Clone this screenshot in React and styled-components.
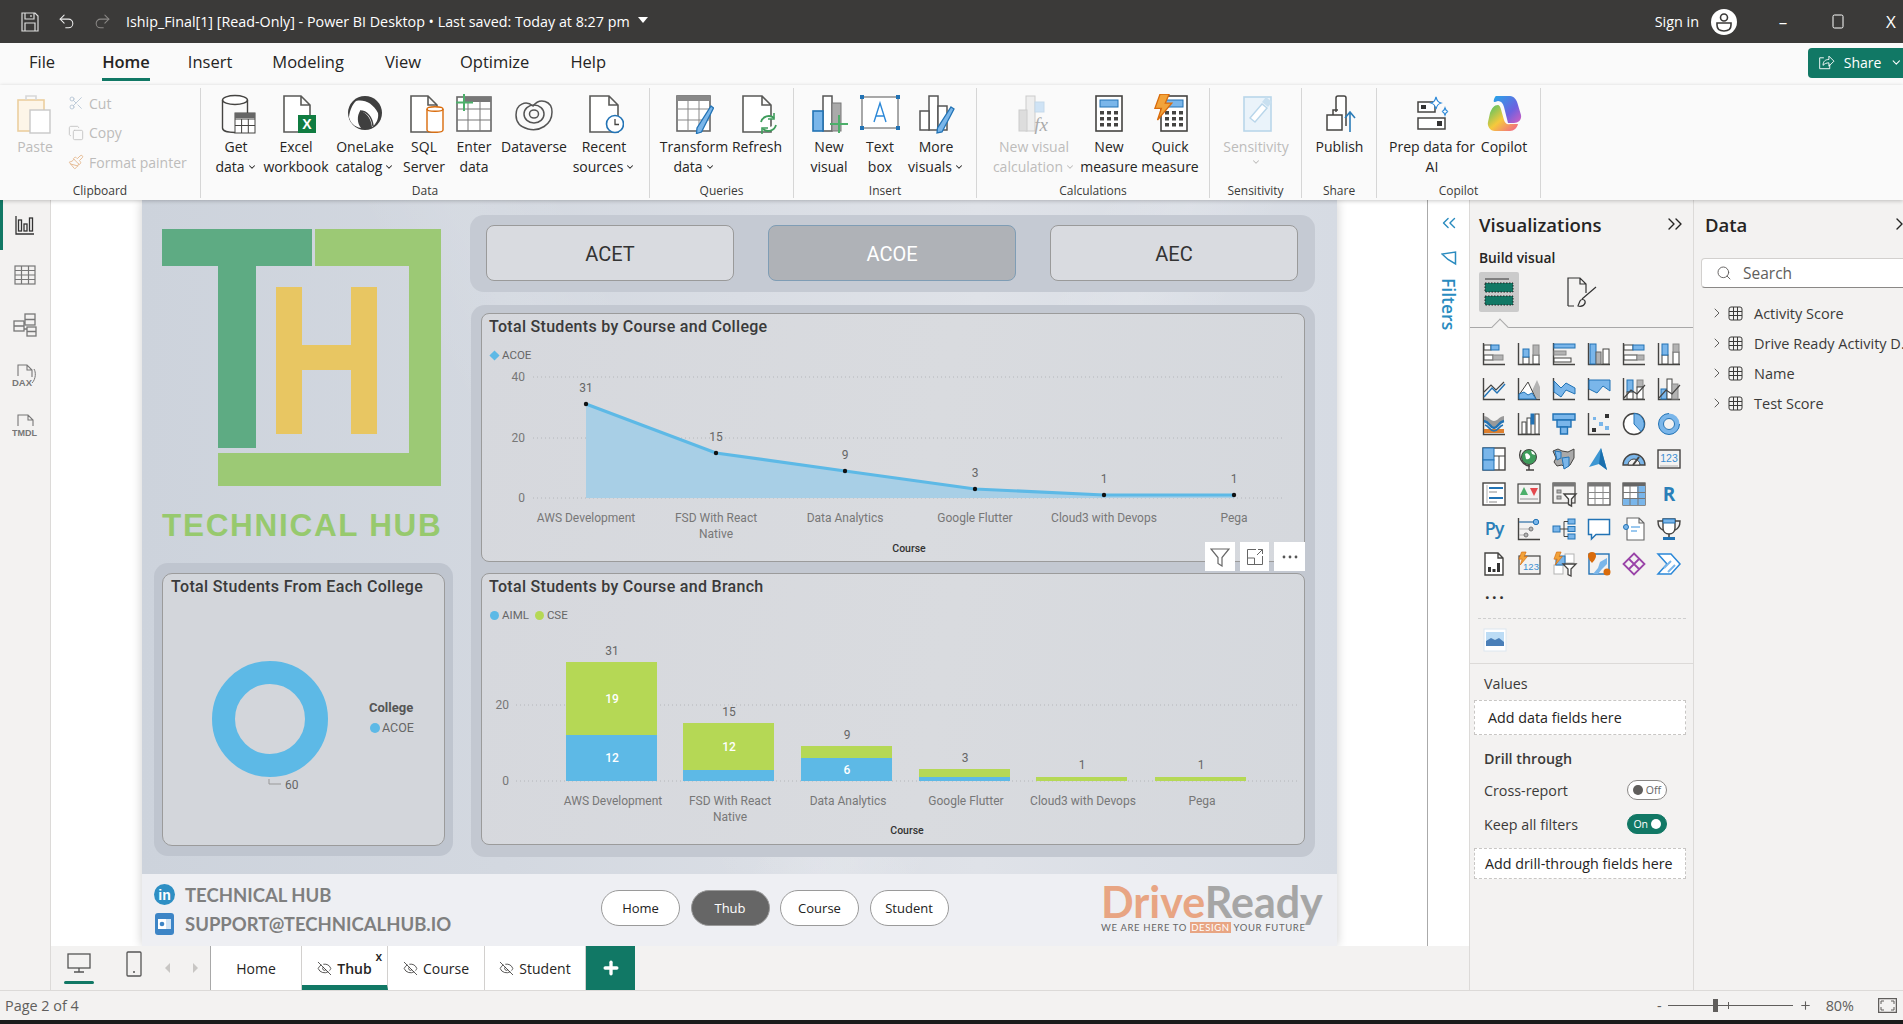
import React from 'react';
import styled, { createGlobalStyle } from 'styled-components';
import { Undo2, Redo2, ChevronDown, ChevronRight, ChevronsLeft, ChevronsRight, Search, EyeOff, Plus, Scissors, Copy, Paintbrush } from 'lucide-react';

const D = '#454442';
const B = '#2273b5';
const L = '#7ab6ea';
const G = '#b3b3b3';
const O = '#d96b0b';
const TEAL = '#117865';
const SKY = '#5db9e6';
const LIME = '#b5d855';
const UI = '"Open Sans", "Noto Sans", sans-serif';
const DIN = 'Roboto, "Liberation Sans", sans-serif';

const Global = createGlobalStyle`
    html, body { margin: 0; padding: 0; background: #f3f2f1; }
    body { font-family: ${UI}; color: #252423; overflow: hidden; }
    * { box-sizing: border-box; }
`;

const Page = styled.div`
    width: 1903px;
    height: 1024px;
    display: flex;
    flex-direction: column;
    overflow: hidden;
`;

/* title bar */
const TitleBar = styled.div`
    height: 43px;
    flex: none;
    background: #3b3a39;
    color: #fff;
    display: flex;
    align-items: center;
    font-size: 14px;
`;
const TitleIcons = styled.div`
    display: flex;
    align-items: center;
    gap: 17px;
    padding-left: 20px;
    width: 126px;
`;
const TitleText = styled.div`
    font-size: 14.3px;
    white-space: nowrap;
`;
const Caret = styled.span`
    width: 0;
    height: 0;
    margin-left: 8px;
    margin-bottom: 4px;
    border-left: 5px solid transparent;
    border-right: 5px solid transparent;
    border-top: 6px solid #fff;
`;
const TitleRight = styled.div`
    margin-left: auto;
    padding-right: 2px;
    display: flex;
    align-items: center;
`;
const SignIn = styled.span`
    font-size: 14.4px;
    margin-right: 12px;
`;
const WinBtn = styled.span`
    width: 20px;
    margin-left: ${p => p.$ml}px;
    display: flex;
    justify-content: center;
    font-size: 17px;
`;

/* ribbon */
const TabsRow = styled.div`
    height: 42px;
    flex: none;
    background: #fafafa;
    display: flex;
    align-items: flex-start;
    padding-left: 29px;
    position: relative;
`;
const MenuTab = styled.div`
    font-size: 16.5px;
    height: 38px;
    padding-top: 7px;
    margin-right: ${p => p.$mr}px;
    font-weight: ${p => p.$active ? 600 : 400};
    border-bottom: ${p => p.$active ? `3px solid ${TEAL}` : '3px solid transparent'};
`;
const ShareBtn = styled.div`
    position: absolute;
    left: 1808px;
    top: 5px;
    width: 95px;
    height: 30px;
    background: ${TEAL};
    color: #fff;
    border-radius: 4px 0 0 4px;
    display: flex;
    align-items: center;
    gap: 9px;
    padding: 0 0 2px 10px;
    font-size: 14px;
`;
const Ribbon = styled.div`
    height: 115px;
    flex: none;
    background: #fafafa;
    display: flex;
    padding: 3px 0 2px;
    position: relative;
    z-index: 3;
    box-shadow: 0 1px 4px rgba(0, 0, 0, .22);
`;
const Group = styled.div`
    width: ${p => p.$w}px;
    flex: none;
    border-right: 1px solid #d6d6d6;
    display: flex;
    flex-direction: column;
`;
const GroupBody = styled.div`
    flex: 1;
    display: flex;
    padding-left: ${p => p.$pl || 0}px;
`;
const GroupName = styled.div`
    height: 20px;
    font-size: 12px;
    line-height: 26px;
    text-align: center;
    color: #3b3a39;
`;
const RibbonBtn = styled.div`
    width: ${p => p.$w}px;
    flex: none;
    display: flex;
    flex-direction: column;
    align-items: center;
    padding-top: 6px;
    color: ${p => p.$off ? '#bdbcbb' : '#252423'};
    font-size: 14px;
    line-height: 20px;
    white-space: nowrap;
    svg.big { width: 40px; height: 40px; margin-bottom: 3px; flex: none; }
    span { display: flex; align-items: center; gap: 2px; }
`;
const SmallCol = styled.div`
    display: flex;
    flex-direction: column;
    padding-top: 5px;
    margin-left: 12px;
    gap: 9.5px;
`;
const SmallItem = styled.div`
    display: flex;
    align-items: center;
    gap: 5px;
    color: #bdbcbb;
    font-size: 14px;
    height: 20px;
    white-space: nowrap;
`;

/* body */
const Body = styled.div`
    height: 790px;
    flex: none;
    display: flex;
`;
const Rail = styled.div`
    width: 51px;
    flex: none;
    background: #f3f2f1;
    border-right: 1px solid #dcdad8;
    display: flex;
    flex-direction: column;
`;
const RailItem = styled.div`
    height: 50px;
    display: flex;
    align-items: center;
    justify-content: center;
    border-left: 3px solid ${p => p.$active ? TEAL : 'transparent'};
    padding-right: 3px;
`;
const Center = styled.div`
    width: 1418px;
    flex: none;
    display: flex;
    flex-direction: column;
`;
const Work = styled.div`
    height: 746px;
    flex: none;
    display: flex;
`;
const Canvas = styled.div`
    width: 1376px;
    flex: none;
    background: #fff;
    padding-left: 91px;
`;
const Report = styled.div`
    width: 1195px;
    height: 746px;
    display: flex;
    flex-direction: column;
    box-shadow: 0 0 10px rgba(0, 0, 0, .2);
    background:
        linear-gradient(118deg, transparent 60%, rgba(255, 255, 255, .1) 66%, transparent 72%),
        linear-gradient(62deg, transparent 38%, rgba(255, 255, 255, .08) 45%, transparent 52%),
        linear-gradient(90deg, #cdd3dc 0%, #d3d8e0 30%, #dfe2e8 70%, #d6dbe3 100%);
`;
const ReportMain = styled.div`
    height: 674px;
    flex: none;
    display: flex;
`;
const LeftCol = styled.div`
    width: 328px;
    flex: none;
    padding: 29px 0 0 12px;
`;
const LogoSvg = styled.svg`
    display: block;
    width: 282px;
    height: 258px;
    margin-left: 7px;
`;
const LogoName = styled.div`
    margin: 25px 0 0 8px;
    width: 282px;
    height: 26px;
    color: #97c96e;
    font: 700 31.5px/26px "Liberation Sans", sans-serif;
    letter-spacing: 1.7px;
    white-space: nowrap;
`;
const OuterCard = styled.div`
    margin-top: 25px;
    width: 299px;
    height: 293px;
    padding: 10px 8px;
    border-radius: 14px;
    background: #bfc5cf;
`;
const InnerCard = styled.div`
    height: 100%;
    display: flex;
    flex-direction: column;
    border: 1px solid #9b9b9b;
    border-radius: 10px;
    background: #d3d6db;
`;
const CardTitle = styled.div`
    height: 26px;
    padding-left: ${p => p.$pl}px;
    font: 500 16px/26px ${DIN};
    letter-spacing: ${p => p.$ls}px;
    color: #3a3a3a;
    white-space: nowrap;
`;
const RightCol = styled.div`
    flex: 1;
    padding-top: 15px;
`;
const SlicerPanel = styled.div`
    width: 845px;
    height: 77px;
    border-radius: 14px;
    background: #c5cad3;
    padding: 10px 17px 11px 16px;
    display: flex;
    justify-content: space-between;
`;
const SlicerBtn = styled.div`
    width: 248px;
    display: flex;
    align-items: center;
    justify-content: center;
    padding-top: 1px;
    border-radius: 8px;
    font: 400 20px ${DIN};
    background: ${p => p.$on ? '#afb2b7' : '#d9dbe0'};
    color: ${p => p.$on ? '#fff' : '#333'};
    border: 1px solid ${p => p.$on ? '#7f9db5' : '#9a9a9a'};
`;
const ChartPanel = styled.div`
    margin: 13px 0 0 1px;
    width: 844px;
    height: 552px;
    padding: 8px 10px 12px;
    border-radius: 14px;
    background: #c3c8d1;
    display: flex;
    flex-direction: column;
    gap: 11px;
`;
const ChartCard = styled.div`
    height: ${p => p.$h}px;
    flex: none;
    position: relative;
    border: 1px solid #9b9b9b;
    border-radius: 8px;
    background: linear-gradient(100deg, #d6d8dd, #d9dbdf 55%, #d5d8dd);
`;
const Legend = styled.div`
    height: 20px;
    margin-top: 5px;
    padding-left: 8px;
    display: flex;
    align-items: center;
    gap: 3px;
    font: 400 11.5px ${DIN};
    color: #666;
`;
const Swatch = styled.i`
    width: 9px;
    height: 9px;
    flex: none;
    background: ${p => p.$c};
    border-radius: ${p => p.$diamond ? '0' : '50%'};
    transform: ${p => p.$diamond ? 'rotate(45deg) scale(.8)' : 'none'};
    margin-left: ${p => p.$ml || 0}px;
`;
const ChartSvg = styled.svg`
    display: block;
    width: 822px;
    height: ${p => p.$h}px;
    font-family: ${DIN};
`;
const DonutSvg = styled.svg`
    display: block;
    width: 280px;
    height: 245px;
    font-family: ${DIN};
`;
const VisualTools = styled.div`
    position: absolute;
    top: 228px;
    right: -1px;
    z-index: 2;
    display: flex;
    gap: 5px;
`;
const ToolBtn = styled.div`
    width: ${p => p.$w}px;
    height: 29px;
    background: #fff;
    display: flex;
    align-items: center;
    justify-content: center;
`;
const Footer = styled.div`
    height: 72px;
    flex: none;
    background: #eeeff3;
    display: flex;
    align-items: center;
`;
const Contacts = styled.div`
    width: 459px;
    flex: none;
    padding: 0 0 2px 12px;
    display: flex;
    flex-direction: column;
    gap: 7px;
`;
const ContactRow = styled.div`
    display: flex;
    align-items: center;
    gap: 10px;
    height: 22px;
    font: 700 18.5px "Lato", sans-serif;
    color: #7f7f7f;
    white-space: nowrap;
`;
const Nav = styled.div`
    display: flex;
    gap: 10.5px;
    margin-bottom: 4px;
`;
const NavBtn = styled.div`
    width: 79px;
    height: 36px;
    border-radius: 18px;
    border: 1px solid #9a9a9a;
    display: flex;
    align-items: center;
    justify-content: center;
    font: 400 13px ${UI};
    background: ${p => p.$on ? '#666' : '#fff'};
    color: ${p => p.$on ? '#fff' : '#222'};
`;
const Drive = styled.div`
    margin-left: auto;
    margin-right: 14px;
    margin-bottom: 5px;
    width: 222px;
`;
const DriveName = styled.div`
    font: 700 43px/41px "Lato", sans-serif;
    color: #a6a6a6;
    white-space: nowrap;
    b { font-weight: 700; color: #e8a583; }
`;
const DriveTag = styled.div`
    font: 400 9.5px/12px "Lato", sans-serif;
    letter-spacing: .65px;
    color: #666;
    white-space: nowrap;
    mark { background: #e8a583; color: #fff; padding: 0 1px; }
`;

/* tab strip */
const TabStrip = styled.div`
    height: 44px;
    flex: none;
    display: flex;
    background: #f3f2f1;
`;
const ViewSwitch = styled.div`
    width: 160px;
    flex: none;
    display: flex;
    align-items: center;
    border-right: 1px solid #a8a8a8;
    padding-left: 13px;
`;
const DeviceBtn = styled.div`
    width: 30px;
    height: 44px;
    margin-right: ${p => p.$mr}px;
    padding-top: 5px;
    display: flex;
    justify-content: center;
    position: relative;
    &::after {
        content: '';
        display: ${p => p.$active ? 'block' : 'none'};
        position: absolute;
        left: 0;
        right: 0;
        bottom: 6px;
        height: 3px;
        border-radius: 2px;
        background: ${TEAL};
    }
`;
const PageTab = styled.div`
    width: ${p => p.$w}px;
    flex: none;
    position: relative;
    background: #fff;
    border-right: 1px solid #d2d0ce;
    border-bottom: ${p => p.$active ? `5px solid ${TEAL}` : '0'};
    display: flex;
    align-items: center;
    justify-content: center;
    gap: 5px;
    padding-top: ${p => p.$active ? 5 : 0}px;
    font-size: 14px;
    font-weight: ${p => p.$active ? 600 : 400};
`;
const TabClose = styled.span`
    position: absolute;
    top: 2px;
    right: 5px;
    font-size: 12px;
    font-weight: 600;
`;
const AddTab = styled.div`
    width: 49px;
    flex: none;
    background: ${TEAL};
    display: flex;
    align-items: center;
    justify-content: center;
`;

/* filter / panes */
const FiltersPane = styled.div`
    width: 42px;
    flex: none;
    background: #fff;
    border-left: 1px solid #aaa;
    color: #2a8bbf;
    display: flex;
    flex-direction: column;
    align-items: center;
    padding-top: 12px;
`;
const FilterFunnel = styled.svg`
    margin-top: 16px;
    flex: none;
`;
const FiltersLabel = styled.div`
    writing-mode: vertical-rl;
    font-size: 17.5px;
    font-weight: 600;
    margin-top: 12px;
    line-height: 20px;
`;
const VizPane = styled.div`
    width: 225px;
    flex: none;
    background: #f3f2f1;
    border-left: 1px solid #dcdad8;
    border-right: 1px solid #dcdad8;
    display: flex;
    flex-direction: column;
`;
const PaneHead = styled.div`
    height: 50px;
    flex: none;
    display: flex;
    align-items: center;
    padding: 0 6px 2px ${p => p.$pl}px;
    justify-content: space-between;
    font-size: 18.5px;
    font-weight: 600;
    color: #252423;
    white-space: nowrap;
`;
const DataClose = styled.span`
    display: flex;
    margin-right: -18px;
`;
const BuildLabel = styled.div`
    height: 16px;
    padding-left: 9px;
    font-size: 13.8px;
    line-height: 16px;
    font-weight: 600;
`;
const BuildRow = styled.div`
    height: 40px;
    margin: 6px 0 0 9px;
    display: flex;
    align-items: center;
    gap: 47px;
`;
const BuildActive = styled.div`
    width: 40px;
    height: 40px;
    background: #cbcbcb;
    border-radius: 2px;
    display: flex;
    align-items: center;
    justify-content: center;
`;
const PaneRule = styled.div`
    height: 1px;
    flex: none;
    margin-top: 15px;
    background: #a8a8a8;
    position: relative;
    &::after {
        content: '';
        position: absolute;
        left: 24px;
        top: -6px;
        width: 11px;
        height: 11px;
        background: #f3f2f1;
        border-left: 1px solid #a8a8a8;
        border-top: 1px solid #a8a8a8;
        transform: rotate(45deg);
    }
`;
const VizGrid = styled.div`
    margin: 8px 0 0 6px;
    display: grid;
    grid-template-columns: repeat(6, 35px);
    grid-auto-rows: 35px;
`;
const VizCell = styled.div`
    display: flex;
    align-items: center;
    justify-content: center;
    svg { width: 24px; height: 24px; display: block; overflow: visible; }
`;
const Dots = styled.div`
    height: 30px;
    padding-left: 15px;
    font-size: 16px;
    font-weight: 700;
    line-height: 24px;
    letter-spacing: 2.5px;
    color: #323130;
`;
const DashRule = styled.div`
    margin: 7px 7px 0 8px;
    border-top: 1px dashed #cfcfcf;
`;
const ImageCell = styled.div`
    margin: 9px 0 0 13px;
    height: 24px;
    svg { width: 24px; height: 24px; display: block; }
`;
const SolidRule = styled.div`
    margin-top: 11px;
    border-top: 1px solid #dcdad8;
`;
const FieldLabel = styled.div`
    height: 20px;
    margin-top: ${p => p.$mt}px;
    padding-left: 14px;
    font-size: 14.3px;
    line-height: 20px;
    font-weight: ${p => p.$bold ? 600 : 400};
    color: #3b3a39;
`;
const DropBox = styled.div`
    margin: ${p => p.$mt}px 7px 0 4px;
    height: ${p => p.$h}px;
    background: #fff;
    border: 1px dashed #c8c6c4;
    padding-left: ${p => p.$pl}px;
    display: flex;
    align-items: center;
    font-size: 14.3px;
    white-space: nowrap;
`;
const ToggleRow = styled.div`
    height: 20px;
    margin-top: ${p => p.$mt}px;
    padding: 0 26px 0 14px;
    display: flex;
    align-items: center;
    justify-content: space-between;
    font-size: 14.3px;
    color: #3b3a39;
`;
const Toggle = styled.div`
    width: 40px;
    height: 20px;
    border-radius: 10px;
    display: flex;
    flex-direction: ${p => p.$on ? 'row' : 'row-reverse'};
    justify-content: flex-end;
    align-items: center;
    gap: 3px;
    padding: 0 5px;
    font-size: 10.5px;
    background: ${p => p.$on ? TEAL : '#fff'};
    color: ${p => p.$on ? '#fff' : '#666'};
    border: 1px solid ${p => p.$on ? TEAL : '#8a8886'};
    &::after {
        content: '';
        width: 10px;
        height: 10px;
        border-radius: 50%;
        background: ${p => p.$on ? '#fff' : '#605e5c'};
    }
`;
const DataPane = styled.div`
    width: 209px;
    flex: none;
    background: #f3f2f1;
    overflow: hidden;
`;
const SearchBox = styled.div`
    margin: 8px -30px 0 7px;
    height: 30px;
    background: #fff;
    border: 1px solid #d2d0ce;
    border-bottom: 1px solid #8a8886;
    border-radius: 4px;
    display: flex;
    align-items: center;
    gap: 11px;
    padding-left: 14px;
    color: #605e5c;
    font-size: 15.5px;
`;
const TableList = styled.div`
    margin-top: 10px;
`;
const TableRow = styled.div`
    height: 30px;
    padding-left: 15px;
    display: flex;
    align-items: center;
    gap: 3px;
    font-size: 14.5px;
    color: #3b3a39;
    white-space: nowrap;
    svg { flex: none; }
    svg + svg { margin-right: 8px; }
`;

/* status */
const StatusBar = styled.div`
    height: 30px;
    flex: none;
    background: #f3f2f1;
    border-top: 1px solid #dcdad8;
    display: flex;
    align-items: center;
    padding-left: 5px;
    font-size: 14.4px;
    color: #605e5c;
    position: relative;
`;
const Zoom = styled.div`
    margin-left: auto;
    display: flex;
    align-items: center;
    padding-right: 6px;
`;
const ZoomSlider = styled.div`
    width: 125px;
    height: 1px;
    margin: 0 6px;
    background: #605e5c;
    position: relative;
    &::before {
        content: '';
        position: absolute;
        left: 45px;
        top: -6px;
        width: 5px;
        height: 13px;
        background: #605e5c;
    }
    &::after {
        content: '';
        position: absolute;
        left: 60px;
        top: -3px;
        width: 1px;
        height: 7px;
        background: #605e5c;
    }
`;
const ZoomPct = styled.span`
    margin: 0 24px 0 14px;
`;
const BlackBar = styled.div`
    height: 4px;
    flex: none;
    background: #1b1b1b;
`;

/* drawing helpers */
const Rc = ({ x, y, w, h, f = '#fff', s = D, sw = 1 }) => (
    <rect x={x} y={y} width={w} height={h} fill={f} stroke={s} strokeWidth={sw} />
);
const Ax = () => <path d="M1.5 1v21.5H23" fill="none" stroke={D} strokeWidth="1.4" />;
const Ln = ({ d, s = D, sw = 1.2, f = 'none' }) => <path d={d} fill={f} stroke={s} strokeWidth={sw} />;
const Doc = ({ x = 7, w = 26, y = 2, h = 36, s = '#5a5a58' }) => (
    <path d={`M${x} ${y}h${w - 9}l9 9v${h - 9}H${x}z M${x + w - 9} ${y}v9h9`} fill="#fff" stroke={s} strokeWidth="1.6" />
);
const Big = ({ children }) => <svg className="big" viewBox="0 0 40 40">{children}</svg>;
const Cal = ({ x = 7 }) => (
    <g>
        <Rc x={x} y={2} w={26} h={35} s={D} sw={1.6} />
        <Rc x={x + 4} y={6} w={18} h={7} f={L} s={B} />
        {[17, 23, 29].map(y => [4, 11, 18].map(dx => <rect key={`${y}-${dx}`} x={x + dx} y={y} width={4} height={3.5} fill={D} />))}
    </g>
);
const Bolt = ({ x = 0, y = 0, k = 1 }) => (
    <path transform={`translate(${x} ${y}) scale(${k})`} d="M7 0h7l-3 7h5L5 20l3-9H3z" fill="#f2a33a" stroke={O} strokeWidth="1" />
);
const Funnel = ({ s = '#555', sw = 1.2, f = 'none' }) => <path d="M1 2h18l-7 8.5V19l-4-2.5v-6z" fill={f} stroke={s} strokeWidth={sw} />;

const ribbonData = [
    { w: 60, l1: 'Get', l2: 'data', c: true, i: <><ellipse cx="19" cy="6" rx="12.5" ry="4.5" fill="#fff" stroke={D} strokeWidth="1.4" /><path d="M6.5 6v28c0 3 6 4.5 12.5 4.5M31.5 6v13" fill="none" stroke={D} strokeWidth="1.4" /><Rc x={19} y={19} w={20} h={20} s={D} /><path d="M19 25h20M19 31.5h20M25.6 25v14M32.3 25v14" stroke={D} /><rect x="19" y="19" width="20" height="5" fill="#666" /></> },
    { w: 60, l1: 'Excel', l2: 'workbook', i: <><Doc x={8} w={26} /><rect x="22" y="21" width="18" height="18" fill="#107c41" /><text x="31" y="35" fontSize="14" fontWeight="700" fill="#fff" textAnchor="middle" fontFamily="Liberation Sans">X</text></> },
    { w: 78, l1: 'OneLake', l2: 'catalog', c: true, i: <><circle cx="20" cy="19" r="17" fill="#3f3f3f" /><path d="M11 7c8-2 17 2 22 12 1 6-2 11-6 14-1-9-6-15-12-16-3 5-3 12 1 17-7-1-11-6-12-11 1-7 3-12 7-16z" fill="#fff" /><path d="M15 17c7 0 12 6 13 15" fill="none" stroke="#3f3f3f" strokeWidth="1.5" /></> },
    { w: 40, l1: 'SQL', l2: 'Server', i: <><Doc x={7} w={26} /><path d="M23 15c0-3 16-3 16 0v21c0 3-16 3-16 0z" fill="#fff" stroke={O} strokeWidth="1.4" /><path d="M23 15c0 3 16 3 16 0" fill="none" stroke={O} strokeWidth="1.4" /></> },
    { w: 60, l1: 'Enter', l2: 'data', i: <><Rc x={3} y={3} w={34} h={34} s="#666" sw={1.6} /><rect x="10" y="3" width="27" height="5" fill="#777" /><path d="M3 15h34M3 26h34M14 8v29M26 8v29" stroke="#777" /><path d="M10 0v17M2 8.5h17" stroke="#4caf6a" strokeWidth="2" /></> },
    { w: 60, l1: 'Dataverse', i: <g fill="none" stroke="#555" strokeWidth="1.5"><path d="M2 21C2 10 12 6 19 12c7-9 19-5 19 6 0 13-13 20-24 17C6 33 2 28 2 21z" /><ellipse cx="20" cy="20" rx="10" ry="9" /><ellipse cx="20" cy="20" rx="4.5" ry="4" /></g> },
    { w: 80, l1: 'Recent', l2: 'sources', c: true, i: <><Doc x={6} w={28} /><circle cx="31" cy="30" r="8.5" fill="#fff" stroke={B} strokeWidth="1.6" /><path d="M31 25v5.5h4" fill="none" stroke={D} strokeWidth="1.3" /></> },
];
const ribbonQueries = [
    { w: 76, l1: 'Transform', l2: 'data', c: true, i: <><Rc x={3} y={2} w={33} h={35} s="#666" sw={1.6} /><rect x="3" y="2" width="33" height="5" fill="#888" /><path d="M3 15h33M3 26h33M14 7v30M25 7v30" stroke="#888" /><path d="M37 12l2.5 2-12 24-5 1.5.5-5.5z" fill={L} stroke={B} strokeWidth="1.3" /></> },
    { w: 50, l1: 'Refresh', i: <><Doc x={6} w={28} /><path d="M24 28a8 8 0 0 1 13-4M39 31a8 8 0 0 1-13 4" fill="#fff" stroke="#3e9c5b" strokeWidth="1.8" /><path d="M37 19v6h-6M25 40v-6h6" fill="none" stroke="#3e9c5b" strokeWidth="1.6" /></> },
];
const ribbonInsert = [
    { w: 60, l1: 'New', l2: 'visual', i: <><Rc x={14} y={2} w={9} h={35} s="#555" sw={1.5} /><Rc x={23} y={9} w={9} h={28} f="#aaa" s="#777" /><Rc x={4} y={17} w={10} h={20} f={L} s={B} sw={1.6} /><path d="M30 21v18M21 30h18" stroke="#4caf6a" strokeWidth="2" /></> },
    { w: 42, l1: 'Text', l2: 'box', i: <><Rc x={2} y={3} w={36} h={31} s="#555" /><path d="M0 1h4v4H0zM36 1h4v4h-4zM0 32h4v4H0zM36 32h4v4h-4z" fill={B} /><path d="M14 28l6-19 6 19M16 22h8" fill="none" stroke="#2b88d8" strokeWidth="1.4" /></> },
    { w: 70, l1: 'More', l2: 'visuals', c: true, i: <><Rc x={13} y={2} w={9} h={34} s="#555" sw={1.5} /><Rc x={4} y={17} w={9} h={19} s="#555" sw={1.5} /><Rc x={22} y={12} w={9} h={24} s="#555" sw={1.5} /><path d="M35 13l3 2-12 23-5 1 .5-5z" fill={L} stroke={B} strokeWidth="1.3" /></> },
];
const ribbonCalc = [
    { w: 88, off: true, l1: 'New visual', l2: 'calculation', c: true, i: <><Rc x={12} y={2} w={9} h={35} f="#eee" s="#ccc" /><Rc x={5} y={16} w={8} h={21} f="#ddd" s="#ccc" /><Rc x={21} y={8} w={9} h={10} f="#cfe3f5" s="#c5d9ea" /><text x="27" y="37" fontSize="19" fontStyle="italic" fill="#aaa" textAnchor="middle" fontFamily="Liberation Serif">fx</text></> },
    { w: 62, l1: 'New', l2: 'measure', i: <Cal /> },
    { w: 60, l1: 'Quick', l2: 'measure', i: <><Cal x={11} /><Bolt x={1} y={0} k={1.3} /></> },
];

const vizIcons = [
    <><Ax /><Rc x={2} y={3} w={7} h={5} /><Rc x={9} y={3} w={8} h={5} f={L} s={B} /><Rc x={2} y={13} w={9} h={5} /><Rc x={11} y={13} w={10} h={5} f={G} s="#8a8a8a" /></>,
    <><Ax /><Rc x={6} y={15} w={6} h={7} /><Rc x={6} y={7} w={6} h={8} f={L} s={B} /><Rc x={16} y={13} w={6} h={9} /><Rc x={16} y={3} w={6} h={10} f={G} s="#8a8a8a" /></>,
    <><Ax /><Rc x={2} y={2} w={21} h={4} f={L} s={B} /><Rc x={2} y={9} w={12} h={4} f={G} s="#8a8a8a" /><Rc x={2} y={16} w={17} h={4} /></>,
    <><Ax /><Rc x={3} y={2} w={6} h={20} f={L} s={B} /><Rc x={9} y={10} w={5} h={12} f={G} s="#666" /><Rc x={16} y={7} w={6} h={15} /></>,
    <><Ax /><Rc x={2} y={3} w={9} h={5} /><Rc x={11} y={3} w={11} h={5} f={L} s={B} /><Rc x={2} y={13} w={13} h={5} /><Rc x={15} y={13} w={7} h={5} f={G} s="#8a8a8a" /></>,
    <><Ax /><Rc x={5} y={13} w={6} h={9} /><Rc x={5} y={2} w={6} h={11} f={L} s={B} /><Rc x={16} y={10} w={6} h={12} /><Rc x={16} y={2} w={6} h={8} f={G} s="#8a8a8a" /></>,
    <><Ax /><Ln d="M2 15l7-7 5 5 8-8" /><Ln d="M2 20l8-9 5 5 8-9" s={B} sw={1.4} /></>,
    <><Ax /><path d="M14 16l6-13 3 7v12H10z" fill={G} /><path d="M2 18l9-13 8 17H2z" fill="#fff" stroke={D} /><path d="M2 22v-5l5-2 4 3 4-2 4 6z" fill={L} stroke={B} /></>,
    <><Ax /><path d="M2 4l7 7 5-5 9 5v6l-9-4-5 7-7-5z" fill={L} stroke={B} /></>,
    <><Ax /><path d="M2 3h21v11l-7-5-6 7-8-4z" fill={L} stroke={B} /></>,
    <><Ax /><Rc x={5} y={3} w={6} h={12} f={L} s={B} /><Rc x={15} y={3} w={6} h={7} f={G} s="#8a8a8a" /><Rc x={5} y={15} w={6} h={7} /><Rc x={15} y={10} w={6} h={12} /><Ln d="M2 21l7-8 6 4 8-9" /></>,
    <><Ax /><Rc x={4} y={12} w={6} h={10} f={L} s={B} /><Rc x={10} y={2} w={5} h={20} /><Rc x={15} y={7} w={6} h={15} f={G} s="#8a8a8a" /><Ln d="M2 21l7-8 6 4 8-9" /></>,
    <><Ax /><path d="M2 4c6 1 6 5 10 5s4-4 10-5v6c-6 2-6 6-10 6S8 12 2 10z" fill="#999" /><path d="M2 9c6 1 6 7 10 7s4-6 10-7" fill="none" stroke={B} strokeWidth="2.4" /><rect x="2" y="17" width="20" height="4" fill={O} opacity=".85" /><path d="M3 13c4 1 5 6 9 6s5-5 9-6" fill="none" stroke={B} strokeWidth="1.6" /></>,
    <><Ax /><Rc x={5} y={10} w={4} h={12} /><Rc x={10} y={6} w={4} h={16} /><Rc x={14} y={2} w={3} h={10} f={B} s={B} /><Rc x={18} y={2} w={4} h={20} /></>,
    <><path d="M1 2h22v6H1z" fill={L} stroke={B} strokeWidth="1.4" /><path d="M5 8h14v7H5z" fill={L} stroke={B} strokeWidth="1.4" /><path d="M8.5 15h7v7h-7z" fill={L} stroke={B} strokeWidth="1.4" /></>,
    <><Ax /><rect x="5" y="16" width="4" height="4" fill="#333" /><rect x="6" y="5" width="3" height="3" fill={L} /><rect x="12" y="10" width="4" height="4" fill={L} /><rect x="18" y="2" width="4" height="4" fill="#333" /><rect x="18" y="14" width="4" height="4" fill={L} /></>,
    <><circle cx="12" cy="12" r="10.5" fill="#fff" stroke={D} strokeWidth="1.5" /><path d="M12 12V1.5a10.5 10.5 0 0 1 7 18z" fill={L} stroke={B} /></>,
    <><circle cx="12" cy="12" r="8" fill="none" stroke={L} strokeWidth="5" /><path d="M12 1.5a10.5 10.5 0 1 0 10.5 10.5" fill="none" stroke={B} strokeWidth="1" /><circle cx="12" cy="12" r="5.5" fill="#f3f2f1" stroke={B} /></>,
    <><Rc x={1} y={1} w={22} h={22} f="#fff" s={D} sw={1.4} /><Rc x={1} y={1} w={11} h={12} f={L} s={B} /><Rc x={1} y={13} w={11} h={10} f={L} s={B} /><path d="M12 9h11M17 9v14" stroke={D} /></>,
    <><circle cx="12" cy="10" r="7.5" fill="#3e9c5b" stroke={D} /><path d="M8 7c2-2 4 0 5 2s-2 4-4 3zM14 4c2 0 4 2 4 4l-3-1z" fill="#fff" /><path d="M4 3a11 11 0 0 0 9 16M9 23h8M12 19v4" fill="none" stroke={D} strokeWidth="1.4" /></>,
    <><path d="M1 4l5-2 4 2 6 1 6-3v9l-4 7-5 3-3-3-5 1-3-4 2-4z" fill="#a9a9a9" stroke={D} /><path d="M3 4l6 1v6l-4 2zM10 11l7-1v9l-5 3z" fill={L} stroke={B} /></>,
    <><path d="M14 1L2 20l10-3 8 6z" fill="#3d97d3" /><path d="M14 1l-2 16 8 6z" fill="#1a6fae" /></>,
    <><path d="M1 18a11 11 0 0 1 22 0z" fill={L} stroke={D} strokeWidth="1.3" /><path d="M6 18a6 6 0 0 1 12 0z" fill="#f3f2f1" stroke={D} /><path d="M11 18l6-8" stroke={D} strokeWidth="2" /></>,
    <><Rc x={1} y={3} w={22} h={18} f="#f3f2f1" s={D} sw={1.4} /><path d="M3 19h18" stroke={G} /><text x="12" y="15" fontSize="10.5" fill="#3d8fd1" textAnchor="middle" fontFamily="Liberation Sans">123</text></>,
    <><Rc x={1} y={1} w={22} h={22} f="#fff" s={D} sw={1.4} /><path d="M5 3v18" stroke={G} /><path d="M7 6h14M7 16h14" stroke={B} strokeWidth="2" /><path d="M7 10h8M7 20h8" stroke={G} strokeWidth="1.5" /></>,
    <><Rc x={1} y={2} w={22} h={19} f="#f3f2f1" s={D} sw={1.2} /><path d="M7 5l4 8H3z" fill="#4caf6a" /><path d="M13 6h8l-4 8z" fill="#e4484d" /><path d="M3 17h18" stroke={G} strokeWidth="1.5" /></>,
    <><Rc x={1} y={1} w={22} h={20} f="#f3f2f1" s={D} sw={1.2} /><rect x="1" y="1" width="22" height="3.5" fill="#777" /><Rc x={5} y={8} w={4} h={3} f={G} s="#777" /><Rc x={5} y={14} w={4} h={3} f={G} s="#777" /><path d="M12 12h12l-4.5 5v7l-3-1.5V17z" fill="#fff" stroke={D} strokeWidth="1.4" /></>,
    <><Rc x={1} y={1} w={22} h={22} f="#fff" s={D} sw={1.2} /><rect x="1" y="1" width="22" height="3.5" fill="#777" /><path d="M1 10.5h22M1 16.5h22M8 4v19M16 4v19" stroke="#888" /></>,
    <><Rc x={1} y={1} w={22} h={22} f="#fff" s={D} sw={1.2} /><rect x="1" y="1" width="22" height="3.5" fill="#666" /><rect x="1" y="16" width="22" height="7" fill={L} /><rect x="15" y="4" width="8" height="19" fill={L} /><path d="M1 10.5h22M1 16.5h22M8 4v19M16 4v19" stroke="#777" /></>,
    <text x="12" y="19" fontSize="19" fontWeight="700" fill="#2a7fb8" textAnchor="middle" fontFamily="Open Sans">R</text>,
    <text x="12" y="18" fontSize="18" fontWeight="600" fill="#2a7fb8" textAnchor="middle" fontFamily="Open Sans" letterSpacing="-1">Py</text>,
    <><Ax /><path d="M2 5h15M2 12h12M2 18h8" stroke={G} strokeWidth="1" /><path d="M2 5h15" stroke={B} /><circle cx="19" cy="5" r="2.7" fill={L} stroke={B} /><circle cx="14" cy="12" r="2" fill={G} stroke="#777" /><circle cx="9" cy="18" r="2" fill={G} stroke="#777" /></>,
    <><Rc x={1} y={9} w={7} h={6} f={L} s={B} /><Rc x={16} y={2} w={7} h={5} f={L} s={B} /><Rc x={16} y={9.5} w={7} h={5} f={L} s={B} /><Rc x={16} y={17} w={7} h={5} f={L} s={B} /><path d="M8 12h8M12 4.5V19.5M12 4.5h4M12 19.5h4" fill="none" stroke={D} /></>,
    <path d="M1.5 2.5h21v15H9l-4.5 4.5v-4.5h-3z" fill="#fff" stroke={B} strokeWidth="1.5" />,
    <><path d="M5 1h12l5 5v17H5z M17 1v5h5" fill="#fff" stroke="#666" strokeWidth="1.1" /><circle cx="4" cy="10" r="2.5" fill={L} stroke={B} /><path d="M9 10h9M9 14h6" stroke={L} strokeWidth="1.6" /></>,
    <><path d="M6 2h12v9c0 4-3 6-6 6s-6-2-6-6z" fill="#fff" stroke={D} strokeWidth="1.4" /><path d="M6 2h12v4H6z" fill={L} stroke={B} /><path d="M6 4H1c0 6 2 8 5 9M18 4h5c0 6-2 8-5 9" fill="none" stroke={D} strokeWidth="1.4" /><path d="M12 17v3" stroke={D} strokeWidth="1.6" /><rect x="6" y="20" width="12" height="3" fill={B} /></>,
    <><path d="M3 1h13l5 5v17H3z M16 1v5h5" fill="#fff" stroke={D} strokeWidth="1.4" /><path d="M6 20v-5h3v5zM10.5 20v-3h3v3zM15 20v-9h3v9z" fill="#333" /></>,
    <><Rc x={2} y={4} w={21} h={18} f="#f3f2f1" s={D} sw={1.2} /><text x="14" y="18" fontSize="9.5" fill="#3d8fd1" textAnchor="middle" fontFamily="Liberation Sans">123</text><Bolt x={0} y={0} k={.65} /></>,
    <><Rc x={13} y={2} w={9} h={9} f="#fff" s={G} /><Rc x={2} y={13} w={9} h={9} f="#fff" s={G} /><Rc x={4} y={4} w={9} h={9} f={L} s={B} /><path d="M11 12h13l-5 5v7l-3-1.5V17z" fill="#fff" stroke={D} strokeWidth="1.3" /><Bolt x={0} y={0} k={.65} /></>,
    <><Rc x={2} y={2} w={20} h={20} f="#f3f2f1" s={B} sw={1.4} /><path d="M6 22l5-6 2-6 7-4v6l-5 5-4 5z" fill={L} /><path d="M5 0a4 4 0 0 1 4 4c0 3-4 7-4 7S1 7 1 4a4 4 0 0 1 4-4z" fill={O} /><circle cx="20" cy="20" r="3.5" fill={O} /></>,
    <path d="M12 1.5L22.5 12 12 22.5 1.5 12zM7 7l10 10M17 7L7 17" fill="none" stroke="#9a44a8" strokeWidth="1.8" />,
    <><path d="M1 2h13l9 10-9 10H1l9-10z" fill="#fff" stroke="#2b88d8" strokeWidth="1.5" /><path d="M7 16l7-7M11 20l7-7" stroke={L} strokeWidth="2" /></>,
];

const chartOne = [
    { x: 586, y: 404, v: 31, l: ['AWS Development'] },
    { x: 716, y: 453, v: 15, l: ['FSD With React', 'Native'] },
    { x: 845, y: 471, v: 9, l: ['Data Analytics'] },
    { x: 975, y: 489, v: 3, l: ['Google Flutter'] },
    { x: 1104, y: 495, v: 1, l: ['Cloud3 with Devops'] },
    { x: 1234, y: 495, v: 1, l: ['Pega'] },
];
const chartTwo = [
    { x: 566, top: 662, split: 735, v: 31, cse: '19', aiml: '12', tot: 651, l: ['AWS Development'] },
    { x: 683, top: 723, split: 770, v: 15, cse: '12', tot: 712, l: ['FSD With React', 'Native'] },
    { x: 801, top: 746, split: 758, v: 9, aiml: '6', tot: 735, l: ['Data Analytics'] },
    { x: 919, top: 769, split: 777, v: 3, tot: 758, l: ['Google Flutter'] },
    { x: 1036, top: 777, split: 781, v: 1, tot: 765, l: ['Cloud3 with Devops'] },
    { x: 1155, top: 777, split: 781, v: 1, tot: 765, l: ['Pega'] },
];

const XLabel = ({ x, y, lines }) => lines.map((t, i) => (
    <text key={t} x={x} y={y + i * 16} fontSize="12" fill="#777" textAnchor="middle">{t}</text>
));

const LineChart = () => {
    const pts = chartOne.map(p => `${p.x},${p.y}`).join(' ');
    return (
        <ChartSvg $h={196} viewBox="482 365 822 196">
            {[377, 438, 498].map(y => <line key={y} x1="533" x2="1283" y1={y} y2={y} stroke="#b4b6ba" strokeDasharray="1 3" />)}
            {[[40, 381], [20, 442], [0, 502]].map(([t, y]) => <text key={t} x="525" y={y} fontSize="12" fill="#777" textAnchor="end">{t}</text>)}
            <polygon points={`586,498 ${pts} 1234,498`} fill="#a8cfe6" />
            <polyline points={pts} fill="none" stroke={SKY} strokeWidth="3.2" />
            {chartOne.map(p => (
                <g key={p.x}>
                    <circle cx={p.x} cy={p.y} r="2.2" fill="#111" />
                    <text x={p.x} y={p.y - 12} fontSize="12" fill="#666" textAnchor="middle">{p.v}</text>
                    <XLabel x={p.x} y={522} lines={p.l} />
                </g>
            ))}
            <text x="909" y="552" fontSize="10.5" fontWeight="500" fill="#333" textAnchor="middle">Course</text>
        </ChartSvg>
    );
};

const BarChart = () => (
    <ChartSvg $h={219} viewBox="482 625 822 219">
        {[705, 781].map(y => <line key={y} x1="516" x2="1297" y1={y} y2={y} stroke="#b4b6ba" strokeDasharray="1 3" />)}
        <text x="509" y="709" fontSize="12" fill="#777" textAnchor="end">20</text>
        <text x="509" y="785" fontSize="12" fill="#777" textAnchor="end">0</text>
        {chartTwo.map(b => (
            <g key={b.x}>
                <rect x={b.x} y={b.top} width="91" height={b.split - b.top} fill={LIME} />
                <rect x={b.x} y={b.split} width="91" height={781 - b.split} fill={SKY} />
                <text x={b.x + 46} y={b.tot + 4} fontSize="12" fill="#666" textAnchor="middle">{b.v}</text>
                {b.cse && <text x={b.x + 46} y={(b.top + b.split) / 2 + 4} fontSize="12" fontWeight="500" fill="#fff" textAnchor="middle">{b.cse}</text>}
                {b.aiml && <text x={b.x + 46} y={(b.split + 781) / 2 + 4} fontSize="12" fontWeight="500" fill="#fff" textAnchor="middle">{b.aiml}</text>}
                <XLabel x={b.x + 47} y={805} lines={b.l} />
            </g>
        ))}
        <text x="907" y="834" fontSize="10.5" fontWeight="500" fill="#333" textAnchor="middle">Course</text>
    </ChartSvg>
);

const RibbonItem = ({ b }) => (
    <RibbonBtn $w={b.w} $off={b.off}>
        <Big>{b.i}</Big>
        <span>{b.l1}</span>
        {b.l2 && <span>{b.l2}{b.c && <ChevronDown size={10} strokeWidth={2.5} />}</span>}
    </RibbonBtn>
);

const TableGlyph = () => (
    <svg width="15" height="15" viewBox="0 0 15 15">
        <rect x="1" y="1" width="13" height="13" rx="2" fill="none" stroke="#3b3a39" />
        <path d="M1 5.5h13M1 9.5h13M5.5 1v13M9.5 1v13" stroke="#3b3a39" />
    </svg>
);

const tables = ['Activity Score', 'Drive Ready Activity D...', 'Name', 'Test Score'];
const pages = [
    { n: 'Thub', w: 86, active: true },
    { n: 'Course', w: 97 },
    { n: 'Student', w: 101 },
];

const App = () => (
    <Page>
        <Global />
        <TitleBar>
            <TitleIcons>
                <svg width="20" height="20" viewBox="0 0 20 20" fill="none" stroke="#ddd" strokeWidth="1.2">
                    <path d="M2 1h13l3 3v15H2zM5 1v6h9V1M5 19v-8h10v8M11 3v2" />
                </svg>
                <Undo2 size={19} strokeWidth={1.3} color="#eee" />
                <Redo2 size={19} strokeWidth={1.3} color="#8a8886" />
            </TitleIcons>
            <TitleText>Iship_Final[1] [Read-Only] - Power BI Desktop • Last saved: Today at 8:27 pm</TitleText>
            <Caret />
            <TitleRight>
                <SignIn>Sign in</SignIn>
                <svg width="26" height="26" viewBox="0 0 26 26">
                    <circle cx="13" cy="13" r="13" fill="#fff" />
                    <circle cx="13" cy="8.5" r="3.5" fill="none" stroke="#3b3a39" strokeWidth="1.6" />
                    <path d="M6 14h14v2c0 4-3 6-7 6s-7-2-7-6z" fill="none" stroke="#3b3a39" strokeWidth="1.6" />
                </svg>
                <WinBtn $ml={36}>–</WinBtn>
                <WinBtn $ml={35}>
                    <svg width="12" height="15" viewBox="0 0 12 15"><rect x="1" y="1" width="10" height="13" rx="1.5" fill="none" stroke="#fff" /></svg>
                </WinBtn>
                <WinBtn $ml={33}>X</WinBtn>
            </TitleRight>
        </TitleBar>

        <TabsRow>
            <MenuTab $mr={47}>File</MenuTab>
            <MenuTab $mr={38} $active>Home</MenuTab>
            <MenuTab $mr={40}>Insert</MenuTab>
            <MenuTab $mr={41}>Modeling</MenuTab>
            <MenuTab $mr={39}>View</MenuTab>
            <MenuTab $mr={41}>Optimize</MenuTab>
            <MenuTab $mr={0}>Help</MenuTab>
            <ShareBtn>
                <svg width="20" height="20" viewBox="0 0 20 20" fill="none" stroke="#fff" strokeWidth="1.1">
                    <path d="M7 5H2v13h12v-5M6 14c0-5 3-7 7-7V3l6 6-6 6v-4c-3 0-5 1-7 3z" />
                </svg>
                Share
                <ChevronDown size={15} />
            </ShareBtn>
        </TabsRow>

        <Ribbon>
            <Group $w={201}>
                <GroupBody $pl={14}>
                    <RibbonBtn $w={42} $off>
                        <Big>
                            <Rc x={3} y={6} w={26} h={31} f="#fdf5e8" s="#eccf9f" sw={1.6} />
                            <path d="M11 6V2h10v4" fill="none" stroke="#d8d8d8" strokeWidth="1.6" />
                            <Rc x={15} y={16} w={20} h={23} f="#fff" s="#c8c8c8" sw={1.4} />
                        </Big>
                        <span>Paste</span>
                    </RibbonBtn>
                    <SmallCol>
                        <SmallItem><Scissors size={16} strokeWidth={1.3} color="#b5c4d4" />Cut</SmallItem>
                        <SmallItem><Copy size={16} strokeWidth={1.3} color="#c0c0c0" />Copy</SmallItem>
                        <SmallItem><Paintbrush size={16} strokeWidth={1.3} color="#e3b488" />Format painter</SmallItem>
                    </SmallCol>
                </GroupBody>
                <GroupName>Clipboard</GroupName>
            </Group>
            <Group $w={449}>
                <GroupBody $pl={5}>{ribbonData.map(b => <RibbonItem key={b.l1} b={b} />)}</GroupBody>
                <GroupName>Data</GroupName>
            </Group>
            <Group $w={144}>
                <GroupBody $pl={6}>{ribbonQueries.map(b => <RibbonItem key={b.l1} b={b} />)}</GroupBody>
                <GroupName>Queries</GroupName>
            </Group>
            <Group $w={183}>
                <GroupBody $pl={5}>{ribbonInsert.map(b => <RibbonItem key={b.l1} b={b} />)}</GroupBody>
                <GroupName>Insert</GroupName>
            </Group>
            <Group $w={233}>
                <GroupBody $pl={13}>{ribbonCalc.map(b => <RibbonItem key={b.l2} b={b} />)}</GroupBody>
                <GroupName>Calculations</GroupName>
            </Group>
            <Group $w={92}>
                <GroupBody>
                    <RibbonBtn $w={92} $off>
                        <Big>
                            <Rc x={8} y={3} w={27} h={34} f="#eaf3fa" s="#b9d6ea" sw={1.6} />
                            <path d="M14 24l12-14 5 4-12 14z" fill="#fff" stroke="#b9d6ea" strokeWidth="1.4" />
                            <path d="M30 3l6 5-4 5-6-5z" fill="#c9e0f0" />
                        </Big>
                        <span>Sensitivity</span>
                        <span><ChevronDown size={10} strokeWidth={2.5} /></span>
                    </RibbonBtn>
                </GroupBody>
                <GroupName>Sensitivity</GroupName>
            </Group>
            <Group $w={75}>
                <GroupBody>
                    <RibbonBtn $w={75}>
                        <Big>
                            <path d="M16 18V4a2 2 0 0 1 2-2h6a2 2 0 0 1 2 2v28" fill="#fff" stroke={D} strokeWidth="1.5" />
                            <Rc x={7} y={21} w={15} h={15} f="#fff" s={D} sw={1.5} />
                            <path d="M13 21v-5h5" fill="none" stroke={D} strokeWidth="1.5" />
                            <path d="M30 38V18M25 24l5-6 5 6" fill="none" stroke="#2b7cb8" strokeWidth="1.6" />
                        </Big>
                        <span>Publish</span>
                    </RibbonBtn>
                </GroupBody>
                <GroupName>Share</GroupName>
            </Group>
            <Group $w={164}>
                <GroupBody $pl={6}>
                    <RibbonBtn $w={98}>
                        <Big>
                            <Rc x={6} y={8} w={17} h={10} f="#fff" s={D} sw={1.5} />
                            <rect x="9" y="11" width="5" height="4" fill="#333" />
                            <Rc x={6} y={24} w={27} h={11} f="#fff" s={D} sw={1.5} />
                            <rect x="25" y="27" width="5" height="5" fill="#333" />
                            <path d="M24 3c1 4 2 5 5 6-3 1-4 2-5 6-1-4-2-5-5-6 3-1 4-2 5-6zM33 14c.6 2 1 3 3 3.5-2 .5-2.4 1.5-3 3.5-.6-2-1-3-3-3.5 2-.5 2.4-1.5 3-3.5z" fill="#fff" stroke="#2b88d8" strokeWidth="1.2" />
                        </Big>
                        <span>Prep data for</span>
                        <span>AI</span>
                    </RibbonBtn>
                    <RibbonBtn $w={46}>
                        <Big>
                            <defs>
                                <linearGradient id="cpA" x1="0" y1="0" x2="1" y2="1">
                                    <stop offset="0" stopColor="#27a5e8" />
                                    <stop offset=".6" stopColor="#6b62e0" />
                                    <stop offset="1" stopColor="#d65dc0" />
                                </linearGradient>
                                <linearGradient id="cpB" x1="0" y1="0" x2="1" y2="1">
                                    <stop offset="0" stopColor="#43c26a" />
                                    <stop offset=".5" stopColor="#f5c93c" />
                                    <stop offset="1" stopColor="#f25d8e" />
                                </linearGradient>
                            </defs>
                            <path d="M12 2h14c4 0 7 4 8 9l3 10c1 5-3 8-7 8h-6l-4-16c-1-4-3-6-6-6l-3 1c-3 1 0-6 1-6z" fill="url(#cpA)" />
                            <path d="M14 11c-4 0-6 3-8 8l-2 9c-1 4 2 9 7 9h15c4 0 7-3 8-7h-8c-3 1-5-1-6-4l-2-7c-1-4-2-8-4-8z" fill="url(#cpB)" />
                        </Big>
                        <span>Copilot</span>
                    </RibbonBtn>
                </GroupBody>
                <GroupName>Copilot</GroupName>
            </Group>
        </Ribbon>

        <Body>
            <Rail>
                <RailItem $active>
                    <svg width="20" height="20" viewBox="0 0 20 20" fill="none" stroke="#333" strokeWidth="1.3"><path d="M1 1v18h18" /><rect x="3.5" y="5" width="3" height="11" /><rect x="9" y="9" width="3" height="7" /><rect x="14.5" y="3" width="3" height="13" /></svg>
                </RailItem>
                <RailItem>
                    <svg width="22" height="20" viewBox="0 0 22 20" fill="none" stroke="#777" strokeWidth="1.2"><rect x="1" y="1" width="20" height="18" /><path d="M1 5.5h20M1 10h20M1 14.5h20M7.5 1v18M14.5 1v18" /></svg>
                </RailItem>
                <RailItem>
                    <svg width="24" height="24" viewBox="0 0 24 24" fill="none" stroke="#777" strokeWidth="1.3"><rect x="1" y="8" width="10" height="10" /><rect x="12" y="1" width="10" height="11" /><rect x="14" y="14" width="9" height="9" /><path d="M1 13h10M12 6.5h10M14 18.5h9M11 10h1M11 16h3" /></svg>
                </RailItem>
                <RailItem>
                    <svg width="26" height="24" viewBox="0 0 26 24" fill="none"><path d="M6 13V2h9l5 5v7M15 2v5h5" stroke="#777" strokeWidth="1.1" /><path d="M22 6c2 3 2 10-2 14" stroke="#777" /><text x="0" y="23" fontSize="9.5" fontWeight="700" fill="#777" fontFamily="Liberation Sans">DAX</text></svg>
                </RailItem>
                <RailItem>
                    <svg width="26" height="24" viewBox="0 0 26 24" fill="none"><path d="M6 13V2h10l5 5v6M16 2v5h5" stroke="#777" strokeWidth="1.1" /><text x="0" y="23" fontSize="9" fontWeight="700" fill="#777" fontFamily="Liberation Sans">TMDL</text></svg>
                </RailItem>
            </Rail>

            <Center>
                <Work>
                    <Canvas>
                        <Report>
                            <ReportMain>
                                <LeftCol>
                                    <LogoSvg viewBox="161 229 282 258">
                                        <path d="M162 229h150v37h-56v182h-38V266h-56z" fill="#5eab83" />
                                        <path d="M315 229h126v257H218v-33h191V266h-94z" fill="#9cc975" />
                                        <path d="M276 287h26v58h49v-58h26v147h-26v-64h-49v64h-26z" fill="#e8c662" />
                                    </LogoSvg>
                                    <LogoName>TECHNICAL HUB</LogoName>
                                    <OuterCard>
                                        <InnerCard>
                                            <CardTitle $pl={8} $ls={0.33}>Total Students From Each College</CardTitle>
                                            <DonutSvg viewBox="163 599 280 245">
                                                <circle cx="270" cy="718" r="46.5" fill="none" stroke={SKY} strokeWidth="23" />
                                                <path d="M269 778v5h12" fill="none" stroke="#999" />
                                                <text x="285" y="788" fontSize="12" fill="#666">60</text>
                                                <text x="369" y="711" fontSize="13" fontWeight="700" fill="#555">College</text>
                                                <circle cx="375" cy="727" r="5" fill={SKY} />
                                                <text x="382" y="731" fontSize="12.5" fill="#666">ACOE</text>
                                            </DonutSvg>
                                        </InnerCard>
                                    </OuterCard>
                                </LeftCol>
                                <RightCol>
                                    <SlicerPanel>
                                        <SlicerBtn>ACET</SlicerBtn>
                                        <SlicerBtn $on>ACOE</SlicerBtn>
                                        <SlicerBtn>AEC</SlicerBtn>
                                    </SlicerPanel>
                                    <ChartPanel>
                                        <ChartCard $h={249}>
                                            <CardTitle $pl={7} $ls={0.3}>Total Students by Course and College</CardTitle>
                                            <Legend><Swatch $c={SKY} $diamond />ACOE</Legend>
                                            <LineChart />
                                            <VisualTools>
                                                <ToolBtn $w={30}><svg width="20" height="20" viewBox="0 0 20 20"><Funnel s="#666" /></svg></ToolBtn>
                                                <ToolBtn $w={29}>
                                                    <svg width="18" height="18" viewBox="0 0 18 18" fill="none" stroke="#666"><path d="M10 1.5H1.5v15h15V8M1.5 10h7v6.5M11 7l5.5-5.5M12 1.5h4.5V6" /></svg>
                                                </ToolBtn>
                                                <ToolBtn $w={31}>
                                                    <svg width="18" height="4" viewBox="0 0 18 4" fill="#555"><circle cx="3" cy="2" r="1.4" /><circle cx="9" cy="2" r="1.4" /><circle cx="15" cy="2" r="1.4" /></svg>
                                                </ToolBtn>
                                            </VisualTools>
                                        </ChartCard>
                                        <ChartCard $h={272}>
                                            <CardTitle $pl={7} $ls={0.3}>Total Students by Course and Branch</CardTitle>
                                            <Legend>
                                                <Swatch $c={SKY} />AIML
                                                <Swatch $c={LIME} $ml={3} />CSE
                                            </Legend>
                                            <BarChart />
                                        </ChartCard>
                                    </ChartPanel>
                                </RightCol>
                            </ReportMain>
                            <Footer>
                                <Contacts>
                                    <ContactRow>
                                        <svg width="21" height="21" viewBox="0 0 21 21">
                                            <circle cx="10.5" cy="10.5" r="10.5" fill="#2e8fc4" />
                                            <text x="10.5" y="15.5" fontSize="14" fontWeight="700" fill="#fff" textAnchor="middle" fontFamily="Liberation Sans">in</text>
                                        </svg>
                                        TECHNICAL HUB
                                    </ContactRow>
                                    <ContactRow>
                                        <svg width="21" height="22" viewBox="0 0 21 22">
                                            <rect x="1" y="0" width="19" height="22" rx="3" fill="#3d85c6" />
                                            <rect x="10" y="6" width="7" height="10" fill="#cfe3f5" />
                                            <rect x="4" y="6" width="8" height="10" fill="#fff" />
                                            <circle cx="8" cy="11" r="2.3" fill="#3d85c6" />
                                        </svg>
                                        SUPPORT@TECHNICALHUB.IO
                                    </ContactRow>
                                </Contacts>
                                <Nav>
                                    <NavBtn>Home</NavBtn>
                                    <NavBtn $on>Thub</NavBtn>
                                    <NavBtn>Course</NavBtn>
                                    <NavBtn>Student</NavBtn>
                                </Nav>
                                <Drive>
                                    <DriveName><b>Drive</b>Ready</DriveName>
                                    <DriveTag>WE ARE HERE TO <mark>DESIGN</mark> YOUR FUTURE</DriveTag>
                                </Drive>
                            </Footer>
                        </Report>
                    </Canvas>
                    <FiltersPane>
                        <ChevronsLeft size={22} strokeWidth={1.5} />
                        <FilterFunnel width="16" height="16" viewBox="0 0 16 16" fill="none" stroke="#2a8bbf" strokeWidth="1.5"><path d="M14.5 2v12L7 9.5 1 4z" /></FilterFunnel>
                        <FiltersLabel>Filters</FiltersLabel>
                    </FiltersPane>
                </Work>
                <TabStrip>
                    <ViewSwitch>
                        <DeviceBtn $mr={25} $active>
                            <svg width="26" height="24" viewBox="0 0 26 24" fill="none" stroke="#555" strokeWidth="1.3"><rect x="2" y="3" width="22" height="14" /><path d="M13 17v4M8 21h10" /></svg>
                        </DeviceBtn>
                        <DeviceBtn $mr={14}>
                            <svg width="16" height="26" viewBox="0 0 16 26" fill="none" stroke="#555" strokeWidth="1.3"><rect x="1" y="1" width="14" height="24" rx="1" /><path d="M7 21h2" /></svg>
                        </DeviceBtn>
                        <svg width="10" height="12" viewBox="0 0 10 12" fill="#c8c6c4"><path d="M7 1v10L2 6z" /></svg>
                        <svg width="36" height="12" viewBox="0 0 36 12" fill="#c8c6c4"><path d="M20 1v10l5-5z" /></svg>
                    </ViewSwitch>
                    <PageTab $w={91}>Home</PageTab>
                    {pages.map(p => (
                        <PageTab key={p.n} $w={p.w} $active={p.active}>
                            <EyeOff size={15} strokeWidth={1.2} />
                            {p.n}
                            {p.active && <TabClose>x</TabClose>}
                        </PageTab>
                    ))}
                    <AddTab><Plus size={20} strokeWidth={4} color="#fff" /></AddTab>
                </TabStrip>
            </Center>

            <VizPane>
                <PaneHead $pl={9}>Visualizations<ChevronsRight size={24} strokeWidth={1.4} /></PaneHead>
                <BuildLabel>Build visual</BuildLabel>
                <BuildRow>
                    <BuildActive>
                        <svg width="32" height="32" viewBox="0 0 32 32">
                            <path d="M2 3h24" stroke="#333" />
                            <rect x="2" y="7" width="28" height="9" fill={TEAL} stroke="#222" strokeDasharray="1.5 1.5" />
                            <rect x="2" y="20" width="28" height="9" fill={TEAL} stroke="#222" strokeDasharray="1.5 1.5" />
                        </svg>
                    </BuildActive>
                    <svg width="32" height="32" viewBox="0 0 32 32" fill="none" stroke="#333" strokeWidth="1.2">
                        <path d="M2 30V2h12l6 6v9M14 2v6h6M2 30h6" />
                        <path d="M30 11L16 23M12 30c4 1 8-1 7-5-1-2-4-2-5 0-1 3-2 4-2 5z" />
                    </svg>
                </BuildRow>
                <PaneRule />
                <VizGrid>
                    {vizIcons.map((ic, i) => <VizCell key={i}><svg viewBox="0 0 24 24">{ic}</svg></VizCell>)}
                </VizGrid>
                <Dots>...</Dots>
                <DashRule />
                <ImageCell>
                    <svg viewBox="0 0 24 24">
                        <rect x="1" y="1" width="22" height="22" fill="#fff" stroke="#dce6ef" />
                        <rect x="3" y="4" width="18" height="14" fill="#bcdcf5" />
                        <path d="M3 18v-5l5-3 4 2 4-2 5 4v4z" fill="#4a7fb8" />
                    </svg>
                </ImageCell>
                <SolidRule />
                <FieldLabel $mt={10}>Values</FieldLabel>
                <DropBox $mt={6} $h={35} $pl={13}>Add data fields here</DropBox>
                <FieldLabel $mt={14} $bold>Drill through</FieldLabel>
                <ToggleRow $mt={11}>Cross-report<Toggle>Off</Toggle></ToggleRow>
                <ToggleRow $mt={14}>Keep all filters<Toggle $on>On</Toggle></ToggleRow>
                <DropBox $mt={14} $h={31} $pl={10}>Add drill-through fields here</DropBox>
            </VizPane>

            <DataPane>
                <PaneHead $pl={11}>Data<DataClose><ChevronsRight size={24} strokeWidth={1.4} /></DataClose></PaneHead>
                <SearchBox><Search size={16} strokeWidth={1.4} />Search</SearchBox>
                <TableList>
                    {tables.map(t => (
                        <TableRow key={t}>
                            <ChevronRight size={16} strokeWidth={1.2} />
                            <TableGlyph />
                            {t}
                        </TableRow>
                    ))}
                </TableList>
            </DataPane>
        </Body>

        <StatusBar>
            Page 2 of 4
            <Zoom>
                <span>-</span>
                <ZoomSlider />
                <Plus size={13} strokeWidth={2} />
                <ZoomPct>80%</ZoomPct>
                <svg width="19" height="15" viewBox="0 0 19 15" fill="none" stroke="#605e5c"><rect x=".5" y=".5" width="18" height="14" strokeWidth="1.5" /><path d="M3 6V3h3M16 6V3h-3M3 9v3h3M16 9v3h-3" /></svg>
            </Zoom>
        </StatusBar>
        <BlackBar />
    </Page>
);

export default App;
